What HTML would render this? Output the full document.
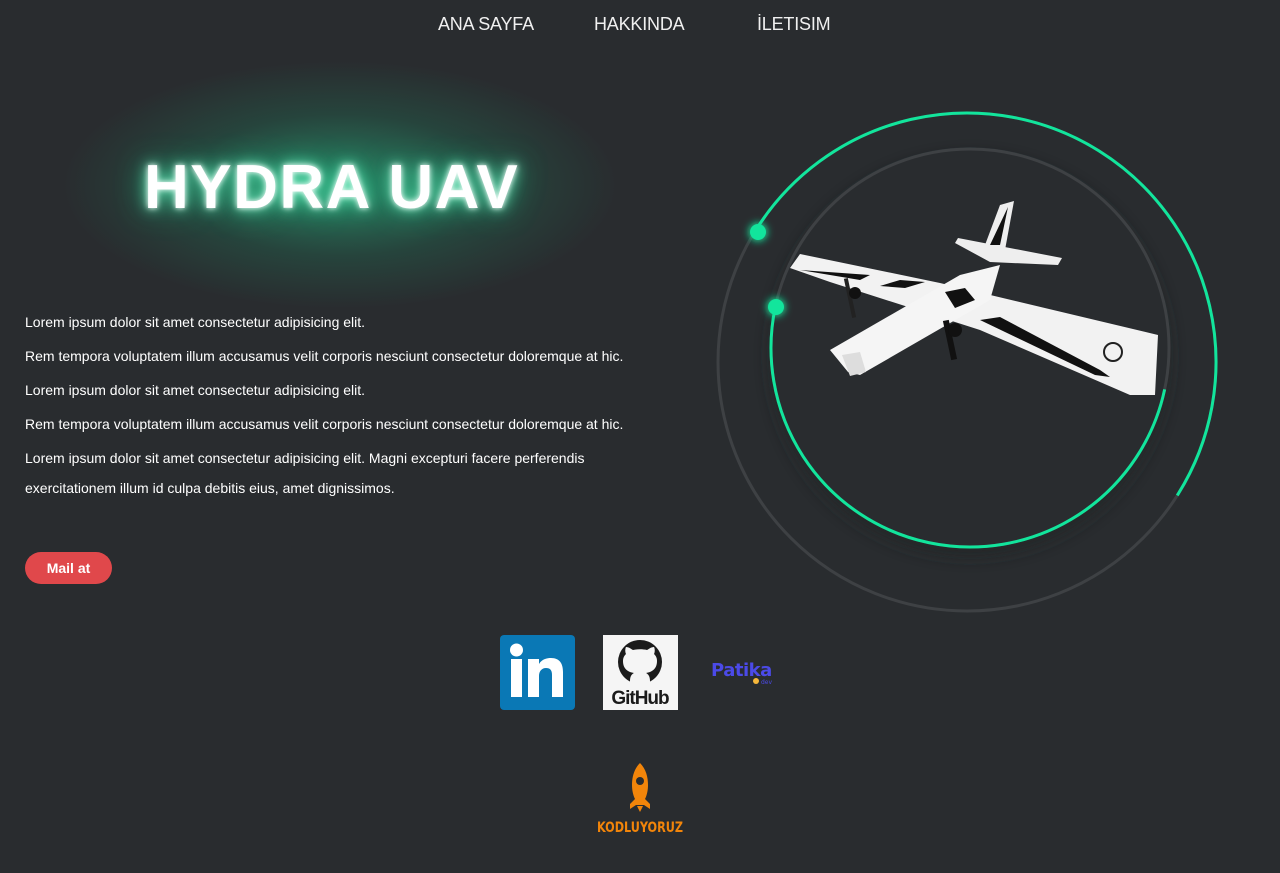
<!DOCTYPE html>
<html><head><meta charset="utf-8"><style>
body{margin:0;width:1280px;height:873px;background:#292c2f;font-family:"Liberation Sans",Arial,sans-serif;overflow:hidden;position:relative;color:#fff}
.nav a{position:absolute;top:14px;font-size:18px;color:#f0f0f0;text-decoration:none;letter-spacing:-0.2px}
.glow{position:absolute;left:60px;top:60px;width:560px;height:250px;border-radius:50%;background:radial-gradient(ellipse at center,rgba(40,200,140,0.55) 0%,rgba(30,140,100,0.25) 40%,rgba(41,44,47,0) 70%)}
h1{position:absolute;left:144px;top:152px;margin:0;font-size:62px;font-weight:bold;letter-spacing:1.5px;color:#fff;text-shadow:0 0 6px #fff,0 0 14px #7fffd0,0 0 30px #1fd18e}
p{position:absolute;left:25px;margin:0;font-size:14px;line-height:30px}
.btn{position:absolute;left:25px;top:552px;width:87px;height:32px;border-radius:16px;background:#e0484b;font-size:14px;font-weight:bold;text-align:center;line-height:32px}
</style></head><body>
<div class="nav"><a style="left:438px">ANA SAYFA</a><a style="left:594px">HAKKINDA</a><a style="left:757px">İLETISIM</a></div>
<div class="glow"></div>
<h1>HYDRA UAV</h1>
<p style="top:307px">Lorem ipsum dolor sit amet consectetur adipisicing elit.</p>
<p style="top:341px">Rem tempora voluptatem illum accusamus velit corporis nesciunt consectetur doloremque at hic.</p>
<p style="top:375px">Lorem ipsum dolor sit amet consectetur adipisicing elit.</p>
<p style="top:409px">Rem tempora voluptatem illum accusamus velit corporis nesciunt consectetur doloremque at hic.</p>
<p style="top:443px;width:610px">Lorem ipsum dolor sit amet consectetur adipisicing elit. Magni excepturi facere perferendis exercitationem illum id culpa debitis eius, amet dignissimos.</p>
<div class="btn">Mail at</div>
<svg style="position:absolute;left:0;top:0" width="1280" height="873">
<defs><filter id="g" x="-2" y="-2" width="5" height="5"><feGaussianBlur stdDeviation="4"/></filter><filter id="s" x="-0.2" y="-0.2" width="1.4" height="1.4"><feGaussianBlur stdDeviation="8"/></filter></defs>
<circle cx="967" cy="362" r="249" fill="none" stroke="#3e4144" stroke-width="3"/>
<circle cx="970" cy="356" r="199" fill="#222528" filter="url(#s)" opacity="0.8"/>
<circle cx="970" cy="348" r="199" fill="#292c2f" stroke="#3e4144" stroke-width="3"/>
<circle cx="967" cy="362" r="249" fill="none" stroke="#12e59c" stroke-width="3" stroke-dasharray="784 2000" transform="rotate(212 967 362)"/>
<circle cx="970" cy="348" r="199" fill="none" stroke="#12e59c" stroke-width="3" stroke-dasharray="625 2000" transform="rotate(12 970 348)"/>
<circle cx="758" cy="232" r="9" fill="#12e59c" filter="url(#g)"/><circle cx="758" cy="232" r="8" fill="#12e59c"/>
<circle cx="776" cy="307" r="9" fill="#12e59c" filter="url(#g)"/><circle cx="776" cy="307" r="8" fill="#12e59c"/>
<g>
<polygon points="790,268 800,254 940,283 1158,335 1155,395 1130,395 980,330 830,282" fill="#f2f2f2"/>
<polygon points="955,243 958,238 1062,258 1058,265 990,262" fill="#eee"/>
<polygon points="985,245 1000,205 1014,201 1005,250" fill="#eee"/>
<polygon points="990,245 1008,207 1000,245" fill="#111"/>
<polygon points="830,350 960,275 1000,265 990,300 860,375 848,372" fill="#f5f5f5"/>
<polygon points="842,355 860,352 866,372 850,376" fill="#ddd"/>
<polygon points="800,270 870,275 860,280" fill="#111"/>
<polygon points="980,320 1000,317 1100,370 1110,377 1095,375" fill="#111"/>
<polygon points="880,286 900,280 925,282 905,288" fill="#111"/>
<polygon points="945,292 965,288 975,300 955,308" fill="#111"/>
<rect x="947" y="320" width="6" height="40" fill="#111" transform="rotate(-12 950 340)"/>
<circle cx="955" cy="330" r="7" fill="#111"/>
<rect x="848" y="278" width="4" height="40" fill="#222" transform="rotate(-12 850 298)"/>
<circle cx="855" cy="293" r="6" fill="#111"/>
<circle cx="1113" cy="352" r="9" fill="none" stroke="#222" stroke-width="2"/>
</g>
<rect x="500" y="635" width="75" height="75" rx="4" fill="#0a78b5"/>
<rect x="511" y="659" width="11" height="38" fill="#fff"/><circle cx="516.5" cy="650" r="6.5" fill="#fff"/>
<path d="M528 659h11v5c3-5 8-6 12-6 9 0 12 6 12 14v25h-11v-22c0-5-2-7-6-7s-7 3-7 8v21h-11z" fill="#fff"/>
<rect x="603" y="635" width="75" height="75" fill="#f5f5f5"/>
<circle cx="640" cy="662" r="22" fill="#1b1b1b"/>
<path d="M630 681c0-5 2-7 4-8-6-1-11-4-11-12 0-3 1-5 3-7-1-2-1-5 0-7 3 0 5 2 7 3 4-1 10-1 14 0 2-1 4-3 7-3 1 2 1 5 0 7 2 2 3 4 3 7 0 8-5 11-11 12 2 1 4 3 4 8v3h-20z" fill="#f5f5f5"/>
<text x="640" y="704" text-anchor="middle" font-family="Liberation Sans,sans-serif" font-weight="bold" font-size="19" fill="#1b1b1b" letter-spacing="-1">GitHub</text>
<text x="711" y="676" font-family="DejaVu Sans,sans-serif" font-weight="bold" font-size="18" fill="#4b4ae8" letter-spacing="-0.5">Patika</text>
<circle cx="756" cy="681" r="3" fill="#f5b73b"/><text x="761" y="684" font-family="DejaVu Sans,sans-serif" font-size="6" fill="#4b4ae8">dev</text>
<path d="M640 763c-6 6-8 14-8 22 0 5 1 10 3 14l-5 5v5l6-4h8l6 4v-5l-5-5c2-4 3-9 3-14 0-8-2-16-8-22z" fill="#f2850a"/>
<circle cx="640" cy="781" r="4" fill="#292c2f"/>
<path d="M637 806h6l-3 6z" fill="#f2850a"/>
<text x="640" y="832" text-anchor="middle" font-family="DejaVu Sans Condensed,Liberation Sans Narrow,sans-serif" font-weight="bold" font-size="14" fill="#f2850a" textLength="86" lengthAdjust="spacingAndGlyphs">KODLUYORUZ</text>
</svg>
</body></html>
